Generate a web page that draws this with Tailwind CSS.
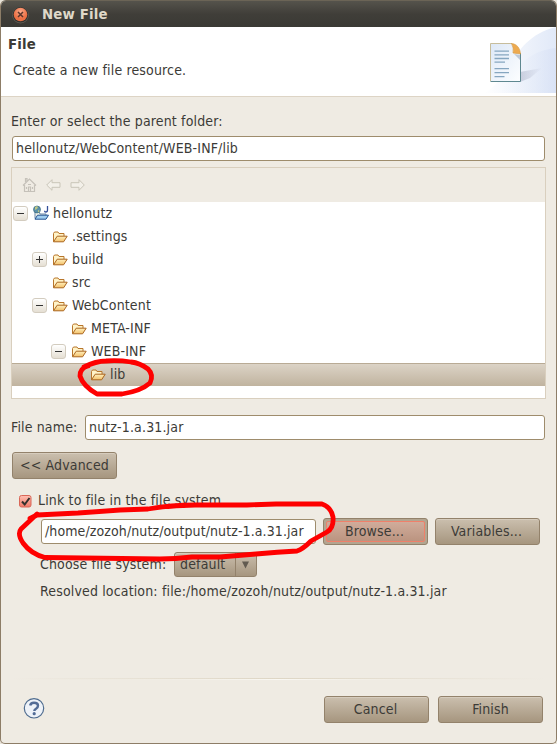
<!DOCTYPE html>
<html lang="en">
<head>
<meta charset="utf-8">
<title>New File</title>
<script src="https://cdn.jsdelivr.net/npm/@tailwindcss/browser@4"></script>
</head>
<body class="h-[744px] w-[557px] overflow-hidden bg-[#e9e4da] font-['DejaVu_Sans_Condensed','DejaVu_Sans',sans-serif] text-[14px] leading-[18px] tracking-[0.15px] text-[#3c3b37] [font-stretch:condensed]">
<svg width="0" height="0" class="absolute">
  <defs>
    <linearGradient id="fold" x1="0" y1="0" x2="0" y2="1"><stop offset="0" stop-color="#fff0bd"/><stop offset="1" stop-color="#f3c069"/></linearGradient>
    <symbol id="folder" viewBox="0 0 16 12">
      <path d="M.5 10.500V2.500L1.500 1h3.500l1 1.500h5v2.500" fill="#fff3c8" stroke="#b8762b"/>
      <path d="M.5 10.800 4.200 5.200h10l-3.600 5.600z" fill="url(#fold)" stroke="#aa651f" stroke-linejoin="round"/>
    </symbol>
  </defs>
</svg>
<main class="relative flex h-[744px] w-[557px] flex-col overflow-hidden rounded-t-[6px] rounded-b-[5px] border border-[#8d7d67] border-t-[#6b6456] bg-[#efebe3]">
  <header class="flex h-[26px] shrink-0 items-center bg-linear-to-b from-[#55534c] via-[#403e39] via-50% to-[#3a3934] pl-[11px]">
    <svg width="18" height="18" viewBox="0 0 18 18" class="mt-px">
      <defs><radialGradient id="cl" cy=".3"><stop offset="0" stop-color="#fba98a"/><stop offset="1" stop-color="#ec7044"/></radialGradient></defs>
      <circle cx="8.500" cy="9.200" r="8.300" fill="#5f5c54"/><circle cx="8.500" cy="8.800" r="7.700" fill="#35332f"/><circle cx="8.500" cy="8.500" r="6.800" fill="url(#cl)"/>
      <path d="m6 6 5 5m0-5-5 5" stroke="#5b352a" stroke-width="1.500"/>
    </svg>
    <h1 class="ml-[12px] pt-[2px] font-['DejaVu_Sans'] text-[13.33px] font-bold whitespace-nowrap text-[#dfd8c8] [font-stretch:normal]">New File</h1>
  </header>
  <section class="flex h-[70px] shrink-0 justify-between border-b border-[#ddd4c5] bg-white">
    <div class="pt-[8px] pl-[7px]">
      <h2 class="pt-px font-['DejaVu_Sans'] text-[13.33px] leading-[18px] font-bold [font-stretch:normal]">File</h2>
      <p class="mt-[7px] pl-[5px] whitespace-nowrap">Create a new file resource.</p>
    </div>
    <svg width="72" height="69" viewBox="484 27 72 69">
      <defs>
        <linearGradient id="sw"><stop offset="0" stop-color="#fff"/><stop offset="1" stop-color="#e1e9f8"/></linearGradient>
        <linearGradient id="sw2"><stop offset="0" stop-color="#f0f4fc" stop-opacity="0"/><stop offset="1" stop-color="#d4def4"/></linearGradient>
        <linearGradient id="pg" x1="0" y1="0" x2="1" y2="1"><stop offset="0" stop-color="#dde8f7"/><stop offset="1" stop-color="#fdfeff"/></linearGradient>
        <linearGradient id="sh"><stop offset="0" stop-color="#aeb4c9"/><stop offset="1" stop-color="#aeb4c9" stop-opacity="0"/></linearGradient>
      </defs>
      <path d="M484 93C508 83 512 37 556 27V93z" fill="url(#sw)"/>
      <path d="M500 93C513 72 525 51 556 48V93z" fill="url(#sw2)" opacity=".6"/>
      <path d="M520 82V72L542 68 530 78z" fill="url(#sh)" opacity=".6"/>
      <path d="M490.500 43.500H512L520.500 53V81.500H490.500z" fill="url(#pg)"/>
      <path d="M490.500 81.500H520.500V53" fill="none" stroke="#5f8890"/>
      <path d="M490.500 81V43.500H512" fill="none" stroke="#c7bd9c"/>
      <path d="M511.500 43.500C517 44 520 48 520.500 54L513 53Q514 48 511.500 43.500z" fill="#edaa50" stroke="#d59a45" stroke-width=".6"/>
      <path d="M514 54l6 6v-5z" fill="#bdc9d8"/>
      <path d="M494.500 51.200h14.500m-14.500 3.600h14.500m-14.500 3.700h14.500m-14.500 3.700h10.500m-10.500 6.500h14.500m-14.500 4h14.500m-14.500 4h10" stroke="#86a6c0" stroke-width="1.300"/>
    </svg>
  </section>
  <div class="flex flex-col pl-[10px]">
    <label class="mt-[15px] h-[18px] whitespace-nowrap">Enter or select the parent folder:</label>
    <div class="mt-[6px] ml-px flex h-[25px] w-[533px] items-center rounded-[3px] border border-[#9e8c6c] bg-white pb-[2px] pl-[3px] whitespace-nowrap">hellonutz/WebContent/WEB-INF/lib</div>
    <section class="mt-[6px] h-[232px] w-[535px] border border-[#d9cfbe] bg-white">
      <div class="flex h-[34px] items-center gap-[9px] bg-[#efebe3] pl-[10px]">
        <svg width="15" height="16" viewBox="0 0 15 16" fill="none" stroke="#c5c1b9"><path d="M1 8.500 7.500 2 14 8.500M2.500 8v6.500h10V8M3.500 5V1.500h1.500V4M6.500 14v-4h2v4M6 7.500h3M4.500 10v2m6-2v2" stroke-width="1.200"/></svg>
        <svg width="15" height="12" viewBox="0 0 15 12" fill="#f3f0e9" stroke="#c9c5b8"><path d="M.7 6 6 .7v3h8v4.600H6v3z"/></svg>
        <svg width="15" height="12" viewBox="0 0 15 12" fill="#f3f0e9" stroke="#c9c5b8"><path d="M14.300 6 9 .7v3H1v4.600h8v3z"/></svg>
      </div>
      <ul class="whitespace-nowrap">
        <li class="flex h-[23px] items-center pl-px">
          <span class="flex size-[15px] items-center justify-center rounded-[3px] border border-[#d3ccbf] bg-linear-to-b from-white to-[#e5dfd3]"><i class="h-px w-[7px] bg-[#333]"></i></span>
          <svg class="-mt-[2px] ml-[5px]" width="16" height="16" viewBox="0 0 16 16"><path d="M2 13.500V7h4l1 2h6v2" fill="#f4f5e8" stroke="#6b87a8"/><path d="m2 14.200 2.500-4H15.500l-2.500 4z" fill="#9fcdf0" stroke="#245291"/><circle cx="4" cy="4.500" r="3.500" fill="#5d91a8" stroke="#386a80" stroke-width=".7"/><path d="M2 2q2-1.500 3 0L4 4 2 5zM5 5l2 1-2 1.500z" fill="#bfc883"/><path d="M14.500 1v4q0 2-1.700 2-1.300 0-1.300-1.300" fill="none" stroke="#344f99" stroke-width="1.300"/></svg>
          <span class="ml-[4px] pb-[2px]">hellonutz</span>
        </li>
        <li class="flex h-[23px] items-center pl-[41px]"><svg width="16" height="12"><use href="#folder"/></svg><span class="ml-[3px] pb-[2px]">.settings</span></li>
        <li class="flex h-[23px] items-center pl-[20px]">
          <span class="relative flex size-[15px] items-center justify-center rounded-[3px] border border-[#d3ccbf] bg-linear-to-b from-white to-[#e5dfd3]"><i class="h-px w-[7px] bg-[#333]"></i><i class="absolute h-[7px] w-px bg-[#333]"></i></span>
          <svg class="ml-[6px]" width="16" height="12"><use href="#folder"/></svg><span class="ml-[3px] pb-[2px]">build</span>
        </li>
        <li class="flex h-[23px] items-center pl-[41px]"><svg width="16" height="12"><use href="#folder"/></svg><span class="ml-[3px] pb-[2px]">src</span></li>
        <li class="flex h-[23px] items-center pl-[20px]">
          <span class="flex size-[15px] items-center justify-center rounded-[3px] border border-[#d3ccbf] bg-linear-to-b from-white to-[#e5dfd3]"><i class="h-px w-[7px] bg-[#333]"></i></span>
          <svg class="ml-[6px]" width="16" height="12"><use href="#folder"/></svg><span class="ml-[3px] pb-[2px]">WebContent</span>
        </li>
        <li class="flex h-[23px] items-center pl-[60px]"><svg width="16" height="12"><use href="#folder"/></svg><span class="ml-[3px] pb-[2px]">META-INF</span></li>
        <li class="flex h-[23px] items-center pl-[39px]">
          <span class="flex size-[15px] items-center justify-center rounded-[3px] border border-[#d3ccbf] bg-linear-to-b from-white to-[#e5dfd3]"><i class="h-px w-[7px] bg-[#333]"></i></span>
          <svg class="ml-[6px]" width="16" height="12"><use href="#folder"/></svg><span class="ml-[3px] pb-[2px]">WEB-INF</span>
        </li>
        <li class="flex h-[23px] items-center bg-linear-to-b from-[#ddd5c8] to-[#c0b39f] pl-[79px] shadow-[inset_0_1px_#b9ab95]"><svg width="16" height="12"><use href="#folder"/></svg><span class="ml-[3px] pb-[2px]">lib</span></li>
      </ul>
    </section>
    <div class="mt-[16px] flex h-[25px] items-center whitespace-nowrap">
      <label class="w-[74px] pb-[2px]">File name:</label>
      <div class="flex h-[25px] w-[460px] items-center rounded-[3px] border border-[#9e8c6c] bg-white pb-[2px] pl-[3px]">nutz-1.a.31.jar</div>
    </div>
    <button class="mt-[12px] ml-px h-[27px] w-[105px] rounded-[3px] border border-[#93826b] bg-linear-to-b from-[#cbbfae] to-[#a6967f] pb-[2px] whitespace-nowrap shadow-[inset_0_1px_#d6ccbd]">&lt;&lt; Advanced</button>
    <div class="mt-[12px] ml-[8px] flex h-[18px] items-center whitespace-nowrap">
      <svg width="13" height="13" viewBox="0 0 13 13" class="mt-[2px]"><defs><linearGradient id="cb" x1="0" y1="0" x2="0" y2="1"><stop offset="0" stop-color="#ffc1b4"/><stop offset="1" stop-color="#f07967"/></linearGradient></defs><rect x=".5" y=".5" width="11.500" height="11.500" rx="2" fill="url(#cb)" stroke="#d96758"/><path d="m3 6.500 2.700 3L10.500 3" fill="none" stroke="#33302c" stroke-width="2"/></svg>
      <span class="ml-[6px]">Link to file in the file system</span>
    </div>
    <div class="mt-[9px] flex h-[27px] items-center pl-[30px]">
      <div class="flex h-[25px] w-[275px] items-center rounded-[3px] border border-[#9e8c6c] bg-white pb-[2px] pl-[3px] tracking-[0.1px] whitespace-nowrap">/home/zozoh/nutz/output/nutz-1.a.31.jar</div>
      <button class="ml-[7px] h-[27px] w-[105px] rounded-[3px] border border-[#93826b] bg-[#b3a590] p-[2px]"><span class="flex h-full items-center justify-center rounded-[2px] border border-[#f0806a] bg-linear-to-b from-[#d0ac9b] to-[#bb9480] pr-[2px] pb-[2px]">Browse...</span></button>
      <button class="ml-[7px] h-[27px] w-[105px] rounded-[3px] border border-[#93826b] bg-linear-to-b from-[#cbbfae] to-[#a6967f] pr-[2px] pb-[2px] shadow-[inset_0_1px_#d6ccbd]">Variables...</button>
    </div>
    <div class="mt-[7px] flex h-[25px] items-center pl-[29px] whitespace-nowrap">
      <span class="w-[134px] pb-[2px]">Choose file system:</span>
      <button class="flex h-[25px] w-[83px] items-center rounded-[3px] border border-[#93826b] bg-linear-to-b from-[#cbbfae] to-[#a6967f] shadow-[inset_0_1px_#d6ccbd]">
        <span class="w-[60px] pb-[2px] pl-[5px] text-left">default</span>
        <span class="flex h-full flex-1 items-center justify-center border-l border-[#93826b] pr-px"><svg width="8" height="8"><path d="M0 .5h7L3.500 7.500z" fill="#625b50"/></svg></span>
      </button>
    </div>
    <p class="mt-[5px] pl-[29px] whitespace-nowrap">Resolved location: file:/home/zozoh/nutz/output/nutz-1.a.31.jar</p>
  </div>
  <footer class="mt-auto h-[65px] shrink-0 px-[11px]">
    <div class="h-[2px] bg-linear-to-r from-[#efebe3] via-[#ded6c5] to-[#efebe3]"><div class="h-px translate-y-px bg-linear-to-r from-transparent via-[#faf8f3] to-transparent"></div></div>
    <div class="mt-[16px] flex h-[27px] items-center">
      <svg class="-mt-[2px] ml-[11px]" width="22" height="22" viewBox="0 0 22 22"><circle cx="11" cy="10.300" r="9.700" fill="#eef2f8" stroke="#4f6c8f" stroke-width="1.200"/><path d="M7.200 7.500Q7.500 4.700 11 4.700q4 0 4 3 0 1.700-2 3-1.700 1-1.700 2.300" fill="none" stroke="#536c96" stroke-width="2.400"/><circle cx="11.200" cy="15.700" r="1.600" fill="#536c96"/></svg>
      <button class="ml-[279px] h-[27px] w-[105px] rounded-[3px] border border-[#93826b] bg-linear-to-b from-[#cbbfae] to-[#a6967f] pr-[2px] pb-[2px] shadow-[inset_0_1px_#d6ccbd]">Cancel</button>
      <button class="ml-[9px] h-[27px] w-[105px] rounded-[3px] border border-[#93826b] bg-linear-to-b from-[#cbbfae] to-[#a6967f] pb-[2px] shadow-[inset_0_1px_#d6ccbd]">Finish</button>
    </div>
  </footer>
  <svg class="pointer-events-none absolute -top-px -left-px" width="557" height="744" viewBox="0 0 557 744" fill="none" stroke="#fe0000" stroke-width="4.800" stroke-linecap="round" stroke-linejoin="round">
    <path d="M88 366Q80 368 80 376 83 386 97 394H122Q141 391 150 383 154 375 148 369 140 363 131 362 118 360 106 361 96 361 84 367"/>
    <path d="M30 518.500 37 515 78 513 120 510 148 509Q172 505 195 505H247L276 504H322Q331 507 333 517 334 528 327 532L311 541Q303 549 297 551 278 552 256 554L220 557H192Q175 559 160 559L45 557.500Q31 554 23 543 17 534 21 529L37 514"/>
  </svg>
</main>
</body>
</html>
